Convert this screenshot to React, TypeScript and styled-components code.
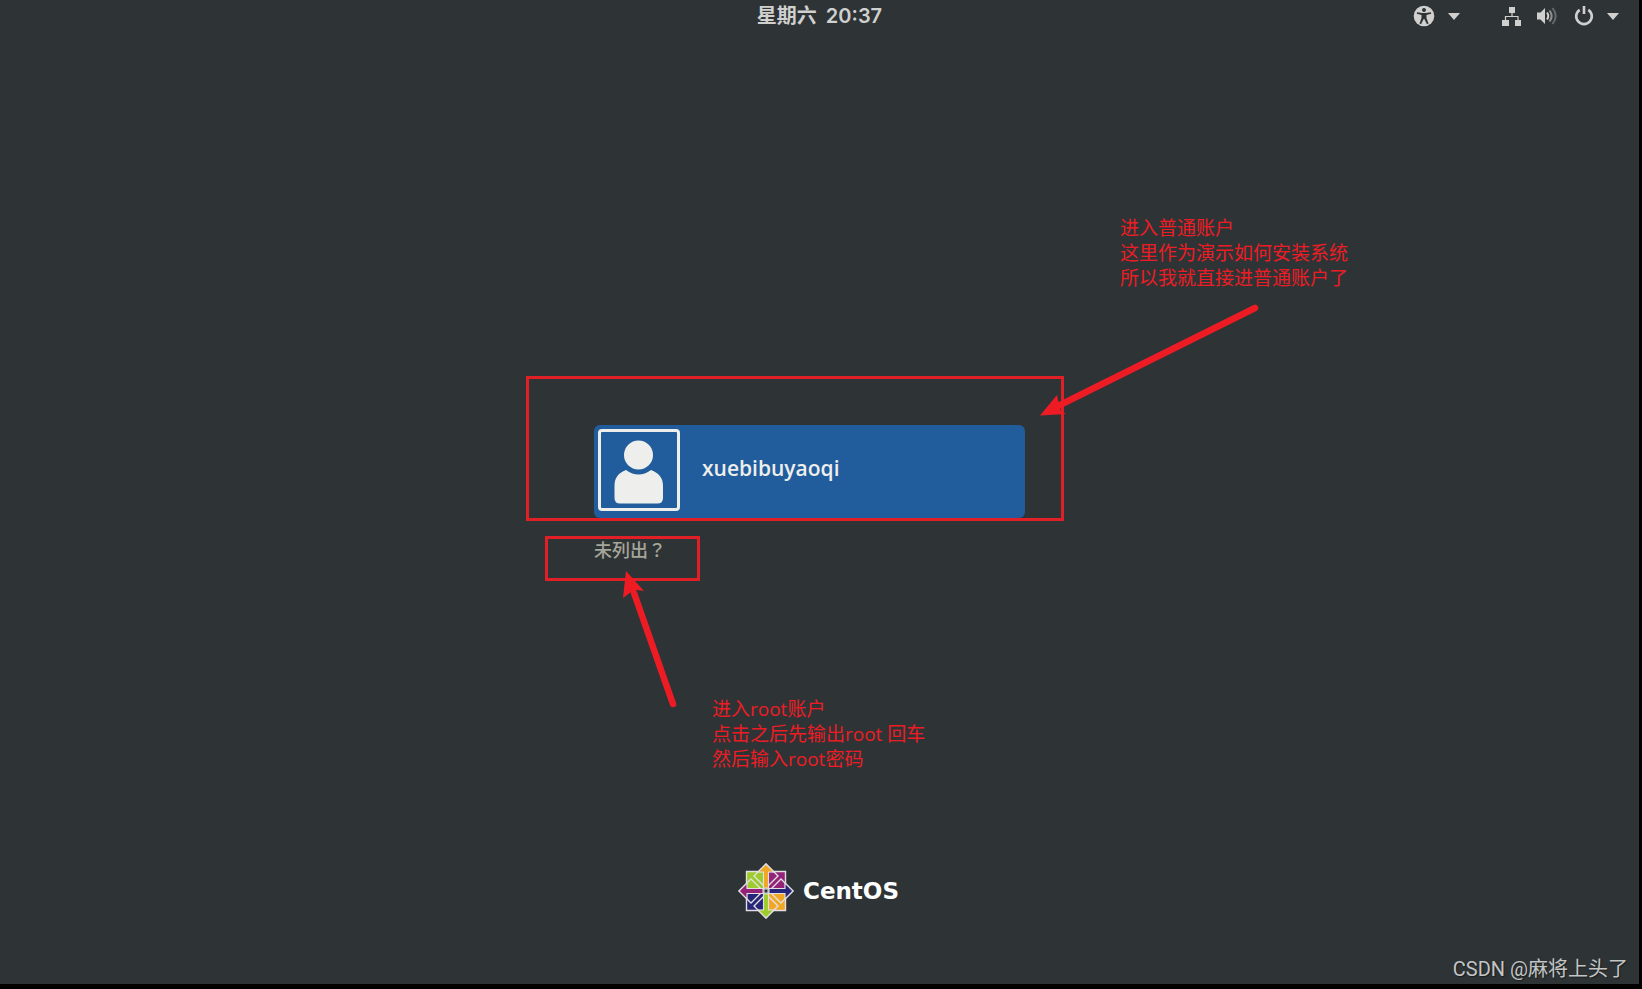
import React from "react";
import styled, { createGlobalStyle } from "styled-components";

const RED = "#ed1c24";

const GlobalStyle = createGlobalStyle`
  *, *::before, *::after { box-sizing: border-box; }
  html, body { margin: 0; background: #000; }
  button { font: inherit; color: inherit; background: none; border: 0; padding: 0; cursor: pointer; }
`;

const Frame = styled.div`
  display: flex;
  min-height: 100vh;
  padding: 0 3px 5px 0;
  background: #000;
  font-family: "Open Sans", "Noto Sans CJK SC", sans-serif;
`;

const Screen = styled.div`
  flex: 1;
  display: grid;
  grid-template-rows: 1fr auto 1fr;
  background: #2e3436;
  overflow: hidden;
`;

const TopBar = styled.header`
  display: grid;
  grid-template-columns: 1fr auto 1fr;
  align-items: center;
  align-self: start;
  height: 32px;
  padding: 0 18px;
  color: #d0d0cf;
`;

const Clock = styled.button`
  grid-column: 2;
  display: flex;
  gap: 9px;
  font-family: Inter, "Noto Sans CJK SC", sans-serif;
  font-size: 20px;
  line-height: 30px;
  font-weight: 600;
`;

const StatusArea = styled.div`
  display: flex;
  justify-content: flex-end;
  gap: 38px;
`;

const StatusButton = styled.button`
  display: flex;
  align-items: center;
  gap: 11px;
`;

const Icon = styled.svg`
  display: block;
  height: 24px;
  fill: currentColor;
`;

const Main = styled.main`
  position: relative;
  justify-self: center;
  width: 451px;
  padding: 2px 20px 0 0;
`;

const UserCard = styled.button`
  display: flex;
  align-items: center;
  gap: 22px;
  width: 100%;
  height: 93px;
  padding: 0 4px 4px;
  border-radius: 6px;
  background: #215d9c;
  color: #eeeeec;
  font-size: 21px;
  line-height: 30px;
  font-weight: 600;
`;

const Avatar = styled.svg`
  width: 82px;
  height: 82px;
  border: 3px solid #eeeeec;
  border-radius: 4px;
  fill: #eeeeec;
`;

const UserName = styled.span`
  padding-bottom: 4px;
`;

const NotListed = styled.button`
  display: block;
  margin-top: 21px;
  margin-bottom: 2px;
  color: #a6a699;
  font-family: "Noto Sans CJK TC", sans-serif;
  font-size: 18px;
  line-height: 20px;
  font-weight: 500;
`;

const Outline = styled.div<{ $x: number; $y: number; $w: number; $h: number }>`
  position: absolute;
  left: ${(p) => p.$x}px;
  top: ${(p) => p.$y}px;
  width: ${(p) => p.$w}px;
  height: ${(p) => p.$h}px;
  border: 3px solid #e01f26;
  pointer-events: none;
`;

const Arrows = styled.svg`
  position: absolute;
  left: 0;
  top: 0;
  width: 1px;
  height: 1px;
  overflow: visible;
  pointer-events: none;
  fill: ${RED};
  stroke: ${RED};
`;

const Note = styled.p<{ $x: number; $y: number }>`
  position: absolute;
  left: ${(p) => p.$x}px;
  top: ${(p) => p.$y}px;
  margin: 0;
  color: ${RED};
  font-size: 19px;
  line-height: 25px;
  white-space: pre;
`;

const Footer = styled.footer`
  position: relative;
  display: flex;
  align-items: flex-end;
  justify-content: center;
  padding: 0 2px 65px 0;
`;

const Brand = styled.div`
  display: flex;
  align-items: center;
  gap: 9px;
  color: #fff;
  font: bold 23px/28px "DejaVu Sans", sans-serif;
`;

const Watermark = styled.div`
  position: absolute;
  right: 11px;
  bottom: 1px;
  color: #c3c5c5;
  font: 20px/28px Roboto, "Noto Sans CJK SC", sans-serif;
  text-shadow: 1px 1px 1px #1a1d1e;
`;

const Caret = () => (
  <Icon width="16" viewBox="0 0 16 24" aria-hidden="true">
    <path d="M2 9h12l-6 7z" />
  </Icon>
);

const AccessIcon = () => (
  <Icon width="24" viewBox="-1 0 24 24" overflow="visible" aria-hidden="true">
    <circle cx="12" cy="12" r="10.3" />
    <g fill="#2e3436">
      <circle cx="12" cy="6" r="2" />
      <path d="M5 8.2 10.3 9h3.4l5.3-.8.2 1.5-4.7 1.2v3l2 5.7-1.5.6-2.7-5.2h-.6L9 20.200l-1.500-.6 2-5.700v-3L4.800 9.700z" />
    </g>
  </Icon>
);

const NetworkIcon = () => (
  <Icon width="24" viewBox="0 0 24 24" aria-hidden="true">
    <path d="M9 3h6v6H9zM2 16h7v6H2zM15 16h6v6h-6z" />
    <path d="M12 8v4.500M5.500 17v-4.500h12.500V17" fill="none" stroke="currentColor" strokeWidth="1.200" />
  </Icon>
);

const VolumeIcon = () => (
  <Icon width="24" viewBox="0 0 24 24" aria-hidden="true">
    <path d="M2 8.500h3.500L10 4v16l-4.500-4.500H2z" />
    <g fill="none" stroke="currentColor" strokeWidth="2">
      <path d="M12 8.500q2.600 3.500 0 7" />
      <path d="M14.500 6.500q4.400 5.500 0 11" opacity=".6" />
      <path d="M17.500 4q6.400 8 0 16" opacity=".35" />
    </g>
  </Icon>
);

const PowerIcon = () => (
  <Icon width="24" viewBox="0 0 24 24" aria-hidden="true">
    <g fill="none" stroke="currentColor" strokeWidth="2.600">
      <path d="M9.700 5.800a7.800 7.800 0 1 0 8.600 0" />
      <path d="M14 2v8" />
    </g>
  </Icon>
);

const quadrants = [
  { angle: 0, square: "#932279", arrow: "#efa724" },
  { angle: 90, square: "#efa724", arrow: "#262577" },
  { angle: 180, square: "#262577", arrow: "#9ccd2a" },
  { angle: 270, square: "#9ccd2a", arrow: "#932279" },
];

const CentMark = () => (
  <svg width="56" height="56" viewBox="-28 -28 56 56" aria-hidden="true">
    {quadrants.map((q) => (
      <path
        key={q.angle}
        transform={`rotate(${q.angle})`}
        d="M2-2V-19.500H19.500V-2z"
        fill={q.square}
        stroke="#e4dfe2"
        strokeWidth="1.400"
      />
    ))}
    {quadrants.map((q) => (
      <g key={q.angle} transform={`rotate(${q.angle})`} stroke="#e4dfe2" strokeWidth="1.100">
        <path d="M0-27 12-15 0-3-12-15z" fill="none" strokeWidth="1.400" />
        <path d="M0-27 8-19H2.500V-3H-2.500V-19H-8z" fill={q.arrow} />
      </g>
    ))}
    <rect x="-2" y="-2" width="4" height="4" fill="#2e3436" stroke="#d8d8d8" />
  </svg>
);

export default function App() {
  return (
    <>
      <GlobalStyle />
      <Frame>
        <Screen>
          <TopBar>
            <Clock type="button">
              <span>星期六</span>
              <span>20:37</span>
            </Clock>
            <StatusArea>
              <StatusButton type="button" aria-label="辅助功能">
                <AccessIcon />
                <Caret />
              </StatusButton>
              <StatusButton type="button" aria-label="系统">
                <NetworkIcon />
                <VolumeIcon />
                <PowerIcon />
                <Caret />
              </StatusButton>
            </StatusArea>
          </TopBar>

          <Main>
            <UserCard type="button">
              <Avatar viewBox="0 0 76 76" aria-hidden="true">
                <circle cx="37.500" cy="23" r="14.500" />
                <path d="M25 38Q37.500 47 50 38C58 41 62 46 62 54V66Q62 71.500 56.500 71.500H19Q13.500 71.500 13.500 66V54C13.500 46 17 41 25 38z" />
              </Avatar>
              <UserName>xuebibuyaoqi</UserName>
            </UserCard>
            <NotListed type="button">未列出？</NotListed>

            <Outline $x={-68} $y={-47} $w={538} $h={145} />
            <Outline $x={-49} $y={113} $w={155} $h={45} />
            <Arrows aria-hidden="true">
              <path d="M661-115 464-17" strokeWidth="6.500" strokeLinecap="round" />
              <path d="M446-7.500 463-28 465-18 467-12 472-9z" stroke="none" />
              <path d="M79 281 40 170" strokeWidth="6.500" strokeLinecap="round" />
              <path d="M32 148 50 168 43 167 37 169 29 175z" stroke="none" />
            </Arrows>
            <Note $x={526} $y={-207}>
              {"进入普通账户\n这里作为演示如何安装系统\n所以我就直接进普通账户了"}
            </Note>
            <Note $x={118} $y={274}>
              {"进入root账户\n点击之后先输出root 回车\n然后输入root密码"}
            </Note>
          </Main>

          <Footer>
            <Brand>
              <CentMark />
              <span>CentOS</span>
            </Brand>
            <Watermark>CSDN @麻将上头了</Watermark>
          </Footer>
        </Screen>
      </Frame>
    </>
  );
}
